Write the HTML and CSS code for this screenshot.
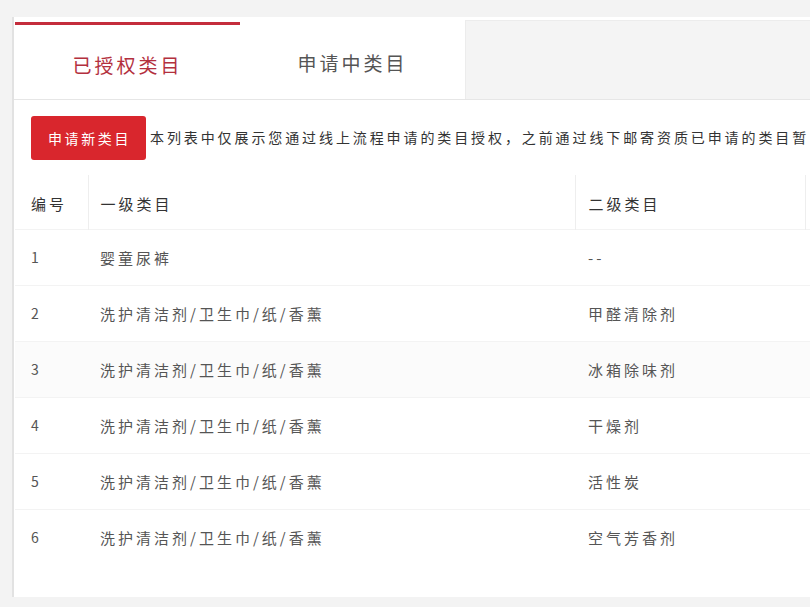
FILE: index.html
```html
<!DOCTYPE html>
<html lang="zh-CN">
<head>
<meta charset="utf-8">
<title>类目授权</title>
<link rel="stylesheet" href="styles.css">
</head>
<body>
<div class="page">
  <div class="topbar"></div>
  <div class="panel">
    <div class="tabs">
      <div class="tab tab-active">已授权类目</div>
      <div class="tab">申请中类目</div>
      <div class="tab-rest"></div>
    </div>
    <div class="toolbar">
      <button class="btn-apply">申请新类目</button>
      <span class="notice">本列表中仅展示您通过线上流程申请的类目授权，之前通过线下邮寄资质已申请的类目暂</span>
    </div>
    <table class="grid">
      <thead>
        <tr>
          <th class="c-no">编号</th>
          <th class="c-l1">一级类目</th>
          <th class="c-l2">二级类目</th>
          <th class="c-more"></th>
        </tr>
      </thead>
      <tbody>
        <tr><td class="c-no">1</td><td class="c-l1">婴童尿裤</td><td class="c-l2">--</td><td class="c-more"></td></tr>
        <tr><td class="c-no">2</td><td class="c-l1">洗护清洁剂/卫生巾/纸/香薰</td><td class="c-l2">甲醛清除剂</td><td class="c-more"></td></tr>
        <tr class="shade"><td class="c-no">3</td><td class="c-l1">洗护清洁剂/卫生巾/纸/香薰</td><td class="c-l2">冰箱除味剂</td><td class="c-more"></td></tr>
        <tr><td class="c-no">4</td><td class="c-l1">洗护清洁剂/卫生巾/纸/香薰</td><td class="c-l2">干燥剂</td><td class="c-more"></td></tr>
        <tr><td class="c-no">5</td><td class="c-l1">洗护清洁剂/卫生巾/纸/香薰</td><td class="c-l2">活性炭</td><td class="c-more"></td></tr>
        <tr><td class="c-no">6</td><td class="c-l1">洗护清洁剂/卫生巾/纸/香薰</td><td class="c-l2">空气芳香剂</td><td class="c-more"></td></tr>
      </tbody>
    </table>
  </div>
</div>
</body>
</html>
```

FILE: styles.css
```css
* { box-sizing: border-box; }
html, body {
  margin: 0;
  padding: 0;
  background: #f3f3f3;
  font-family: "Noto Sans CJK SC", "Liberation Sans", sans-serif;
  overflow: hidden;
}
.page {
  width: 810px;
  height: 607px;
  overflow: hidden;
  padding-left: 12px;
}
.topbar {
  height: 17px;
  background: #f3f3f3;
}
.panel {
  background: #ffffff;
  border-left: 2px solid #e2e2e2;
  height: 580px;
  overflow: hidden;
}
.tabs {
  display: flex;
  height: 83px;
  padding-top: 5px;
  padding-left: 1px;
  border-bottom: 1px solid #e6e6e6;
}
.tab {
  width: 225px;
  flex: none;
  display: flex;
  align-items: center;
  justify-content: center;
  font-size: 19px;
  letter-spacing: 3px;
  color: #555555;
  background: #ffffff;
  padding-top: 4px;
}
.tab-active {
  border-top: 3px solid #c42d3c;
  color: #b3303e;
}
.tab-rest {
  flex: 1;
  margin-top: -2px;
  background: #f4f4f4;
  border-left: 1px solid #ececec;
  border-top: 1px solid #ececec;
}
.toolbar {
  display: flex;
  align-items: center;
  height: 75px;
  padding-left: 17px;
  padding-top: 2px;
  padding-bottom: 1px;
  white-space: nowrap;
}
.btn-apply {
  flex: none;
  width: 115px;
  height: 44px;
  border: none;
  border-radius: 3px;
  background: #d9262d;
  color: #ffffff;
  font-family: inherit;
  font-size: 14px;
  letter-spacing: 2.6px;
  padding: 0 0 0 2px;
}
.notice {
  margin-left: 4px;
  margin-top: -3px;
  font-size: 14px;
  letter-spacing: 2.9px;
  color: #333333;
}
.grid {
  border-collapse: collapse;
  width: 900px;
  table-layout: fixed;
  margin-left: 1px;
}
.grid th, .grid td {
  text-align: left;
  font-weight: normal;
  font-size: 15px;
  letter-spacing: 3px;
  padding: 0;
  white-space: nowrap;
}
.grid th {
  height: 54px;
  padding-top: 3px;
  color: #333333;
  border-right: 1px solid #eeeeee;
}
.grid td {
  height: 56px;
  color: #555555;
  border-top: 1px solid #f3f3f3;
}
.c-no { width: 73px; padding-left: 16px !important; }
.c-l1 { width: 487px; padding-left: 12px !important; }
.c-l2 { width: 230px; padding-left: 13px !important; }
.c-more { width: 110px; }
.grid td.c-no { letter-spacing: 0; font-size: 14px; }
.grid tr.shade td { background: #fbfbfb; }
```
